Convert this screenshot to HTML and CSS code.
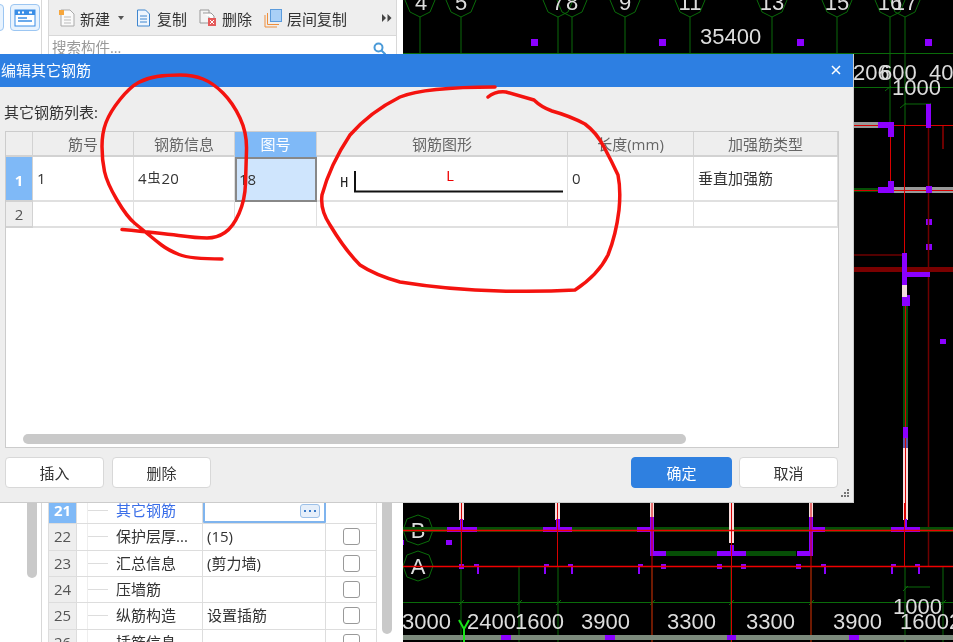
FILE: index.html
```html
<!DOCTYPE html>
<html lang="zh">
<head>
<meta charset="utf-8">
<title>编辑其它钢筋</title>
<link rel="stylesheet" href="styles.css">
</head>
<body>
<div class="app">
  <aside class="strip">
    <div class="strip-tools">
      <span class="tool-btn tool-btn-cut"></span>
      <span class="tool-btn">
        <svg width="22" height="18" viewBox="0 0 22 18"><rect x="1" y="1" width="20" height="16" fill="#fff" stroke="#3a8ee6"/><rect x="1" y="1" width="20" height="5" fill="#3a8ee6"/><rect x="4" y="2.500" width="2" height="2" fill="#fff"/><rect x="8" y="2.500" width="2" height="2" fill="#fff"/><rect x="15" y="2.500" width="3" height="2" fill="#fff"/><path d="M4 9h9M4 12h14" stroke="#3a8ee6" stroke-width="1.500"/></svg>
      </span>
    </div>
    <div class="strip-thumb"></div>
  </aside>

  <section class="panel">
    <div class="toolbar">
      <span class="tb-item tb-new">
        <svg width="18" height="18" viewBox="0 0 18 18"><path d="M3 1h9l4 4v12H3z" fill="#fafafa" stroke="#aaa"/><path d="M6 8h7M6 11h7M6 14h7" stroke="#bbb"/><rect x="1" y="1" width="5" height="5" fill="#f6a63c"/></svg>
        <span>新建</span><i class="caret"></i>
      </span>
      <span class="tb-item tb-copy">
        <svg width="15" height="18" viewBox="0 0 15 18"><path d="M1.500 1h8l4 4v12h-12z" fill="#eef5fd" stroke="#3f86cf"/><path d="M4 7h7M4 10h7M4 13h7" stroke="#3f86cf"/></svg>
        <span>复制</span>
      </span>
      <span class="tb-item tb-del">
        <svg width="18" height="18" viewBox="0 0 18 18"><path d="M1 1h9v13H1z" fill="#f4f4f4" stroke="#999"/><path d="M4 4h8l3 3v4" fill="#fff" stroke="#999"/><rect x="9" y="9" width="8" height="8" fill="#e45b5b"/><path d="M11 11l4 4M15 11l-4 4" stroke="#fff"/></svg>
        <span>删除</span>
      </span>
      <span class="tb-item tb-floor">
        <svg width="18" height="19" viewBox="0 0 18 19"><path d="M1 6v12h12" fill="none" stroke="#ef8f3c"/><path d="M3.500 4v11.500H15" fill="none" stroke="#ef8f3c"/><rect x="6.500" y="0.500" width="11" height="12" fill="#a9d0f7" stroke="#5b9bdc"/></svg>
        <span>层间复制</span>
      </span>
      <svg class="tb-more" width="10" height="8" viewBox="0 0 10 8"><path d="M0 0l4 4-4 4zM5.500 0l4 4-4 4z" fill="#444"/></svg>
    </div>
    <div class="search">
      <span>搜索构件...</span>
      <svg width="13" height="13" viewBox="0 0 13 13"><circle cx="5.500" cy="5.500" r="4" fill="none" stroke="#4a9ad8" stroke-width="2"/><path d="M8.500 8.500l4 4" stroke="#4a9ad8" stroke-width="2"/></svg>
    </div>
    <div class="props-area">
      <div class="props">
        <div class="prow prow-active">
          <span class="pnum pnum-active">21</span><span class="ptree"></span>
          <span class="pname pname-active">其它钢筋</span>
          <span class="pval pval-edit"><span class="ellipsis"><svg width="14" height="4" viewBox="0 0 14 4"><path d="M1 1h2v2H1zM6 1h2v2H6zM11 1h2v2h-2z" fill="#3a7bc8"/></svg></span></span>
          <span class="pcheck"></span>
        </div>
        <div class="prow"><span class="pnum">22</span><span class="ptree"></span><span class="pname">保护层厚...</span><span class="pval">(15)</span><span class="pcheck"><i class="box"></i></span></div>
        <div class="prow"><span class="pnum">23</span><span class="ptree"></span><span class="pname">汇总信息</span><span class="pval">(剪力墙)</span><span class="pcheck"><i class="box"></i></span></div>
        <div class="prow"><span class="pnum">24</span><span class="ptree"></span><span class="pname">压墙筋</span><span class="pval"></span><span class="pcheck"><i class="box"></i></span></div>
        <div class="prow"><span class="pnum">25</span><span class="ptree"></span><span class="pname">纵筋构造</span><span class="pval">设置插筋</span><span class="pcheck"><i class="box"></i></span></div>
        <div class="prow"><span class="pnum">26</span><span class="ptree"></span><span class="pname">插筋信息</span><span class="pval"></span><span class="pcheck"><i class="box"></i></span></div>
      </div>
      <div class="props-thumb"></div>
    </div>
  </section>

  <main class="cad">
    <svg class="cad-svg" width="550" height="642" viewBox="403 0 550 642">
      <!-- top axes -->
      <g class="g-line">
        <path d="M420 17V54M461 17V54M558 17V54M572 17V54M625 17V54M690 17V54M772 17V54M837 17V54M890 17V123M905 17V125"/>
        <path d="M403 53.500H953M853 87.500H953M905 104H930M461 503V642M519 566V642M558 566V642M652 566V642M731 566V642M811 566V642M905 566V642M943 566V642M403 602.500H953M905 587H930"/>
        <path d="M885 91l6-5M900 108l6-5M926 108l5-5M459 605l5-5M517 605l5-5M556 605l5-5M650 605l5-5M729 605l5-5M809 605l5-5M903 591l5-5M941 605l5-5"/>
      </g>
      <g class="g-axis">
        <path d="M405 0l5 12 10 5 10-5 5-12-5-10-20 0z"/>
        <path d="M446 0l5 12 10 5 10-5 5-12-5-10-20 0z"/>
        <path d="M543 0l5 12 10 5 10-5 5-12-5-10-20 0z"/>
        <path d="M557 0l5 12 10 5 10-5 5-12-5-10-20 0z"/>
        <path d="M610 0l5 12 10 5 10-5 5-12-5-10-20 0z"/>
        <path d="M675 0l5 12 10 5 10-5 5-12-5-10-20 0z"/>
        <path d="M757 0l5 12 10 5 10-5 5-12-5-10-20 0z"/>
        <path d="M822 0l5 12 10 5 10-5 5-12-5-10-20 0z"/>
        <path d="M875 0l5 12 10 5 10-5 5-12-5-10-20 0z"/>
        <path d="M890 0l5 12 10 5 10-5 5-12-5-10-20 0z"/>
        <path d="M418 515l11 4 4 11-4 11-11 4-11-4-4-11 4-11z"/>
        <path d="M418 551l11 4 4 11-4 11-11 4-11-4-4-11 4-11z"/>
      </g>
      <g class="cad-text">
        <text x="421" y="10" class="tc">4</text><text x="461" y="10" class="tc">5</text>
        <text x="558" y="10" class="tc">7</text><text x="572" y="10" class="tc">8</text>
        <text x="625" y="10" class="tc">9</text><text x="690" y="10" class="tc">11</text>
        <text x="772" y="10" class="tc">13</text><text x="837" y="10" class="tc">15</text>
        <text x="890" y="10" class="tc">16</text><text x="905" y="10" class="tc">17</text>
        <text x="700" y="44">35400</text>
        <text x="853" y="80">206</text><text x="880" y="80">600</text><text x="929" y="80">40</text>
        <text x="892" y="95">1000</text>
        <text x="418" y="538" class="tc">B</text><text x="418" y="574" class="tc">A</text>
        <text x="402" y="629">3000</text><text x="467" y="629">2400</text><text x="515" y="629">1600</text>
        <text x="581" y="629">3900</text><text x="667" y="629">3300</text><text x="746" y="629">3300</text>
        <text x="833" y="629">3900</text><text x="893" y="614">1000</text><text x="900" y="629">16002</text>
      </g>
      <!-- purple dots -->
      <g class="purple">
        <rect x="531" y="39" width="7" height="7"/><rect x="659" y="39" width="7" height="7"/>
        <rect x="797" y="39" width="7" height="7"/><rect x="925" y="39" width="7" height="7"/>
        <rect x="926" y="219" width="6" height="6"/><rect x="926" y="244" width="6" height="6"/>
        <rect x="940" y="339" width="6" height="5"/><rect x="446" y="540" width="6" height="5"/>
        <rect x="403" y="540" width="1" height="5"/>
      </g>
      <!-- walls, upper right -->
      <rect class="wall" x="853" y="122" width="28" height="6"/>
      <rect class="wall" x="893" y="187" width="60" height="6"/>
      <rect class="band" x="853" y="188" width="26" height="4"/>
      <rect class="band" x="903" y="306" width="5" height="121"/>
      <rect class="wall-v" x="903" y="448" width="5" height="72"/>
      <rect class="wall-b" x="903" y="438" width="5" height="10"/>
      <path class="red-fine" d="M853 125.500H953M943 125V149M890.500 137V182M904.500 125V253M853 190.500H953"/>
      <path class="dark-red" d="M928.500 125V566M853 255H903"/>
      <rect class="dark-band" x="853" y="267" width="100" height="5"/>
      <path class="red-fine" d="M905.500 306V520"/>
      <path class="purple" d="M926 104h5v24h-5zM878 122h16v15h-6v-9h-10zM888 181h6v12h-16v-6h10zM926 186h6v7h-6zM902 253h5v19h23v5h-23v18h3v11h-8z"/>
      <rect class="purple" x="903" y="427" width="5" height="11"/>
      <rect x="902" y="285" width="5" height="12" fill="#f2dcdc"/>
      <!-- walls, lower -->
      <rect class="band" x="403" y="527" width="550" height="5"/>
      <rect class="band" x="666" y="551" width="51" height="5"/>
      <rect class="band" x="746" y="551" width="50" height="5"/>
      <rect class="wall-v" x="459" y="503" width="5" height="17"/>
      <rect class="wall-v" x="555" y="503" width="5" height="17"/>
      <rect class="wall-v" x="650" y="503" width="4" height="14"/>
      <rect class="wall-v" x="729" y="503" width="5" height="40"/>
      <rect class="wall-v" x="809" y="503" width="4" height="14"/>
      <path class="purple" d="M447 527h13v-8h3v8h14v5h-30zM543 527h13v-8h4v8h12v5h-29zM637 527h13v-10h4v34h12v5h-16v-24h-13zM809 517h4v10h12v5h-12v24h-16v-5h12zM891 527h13v-8h3v8h13v5h-29zM717 551h13v-6h4v6h12v5h-29z"/>
      <g class="purple">
        <rect x="459" y="564" width="5" height="5"/><rect x="661" y="564" width="5" height="5"/>
        <rect x="717" y="564" width="5" height="5"/><rect x="741" y="564" width="5" height="5"/><rect x="796" y="564" width="5" height="5"/>
        <path d="M474 564h5v10h-2v-7h-3zM544 564h5v3h-3v7h-2zM568 564h5v10h-2v-7h-3zM638 564h5v3h-3v7h-2zM821 564h5v10h-2v-7h-3zM891 564h5v3h-3v7h-2zM915 564h5v10h-2v-7h-3z"/>
      </g>
      <path class="red-line" d="M403 530.500H953M403 566.500H953"/>
      <path class="red-fine" d="M461.500 503V566M557.500 503V566M652 503V642M731.500 503V642M811 503V642M904.500 503V566"/>
      <!-- bottom band -->
      <rect x="403" y="635" width="550" height="5" fill="#7c8a7c"/>
      <g class="purple">
        <rect x="501" y="635" width="10" height="5"/><rect x="605" y="635" width="10" height="5"/>
        <rect x="727" y="635" width="9" height="5"/><rect x="849" y="635" width="10" height="5"/>
      </g>
      <path class="y-axis" d="M459 620l5 9 5-9M464 629V642"/>
    </svg>
  </main>

  <div class="dialog">
    <header class="dlg-title">
      <span>编辑其它钢筋</span>
      <svg class="dlg-close" width="10" height="10" viewBox="0 0 10 10"><path d="M1 1l8 8M9 1l-8 8" stroke="#fff" stroke-width="1.500"/></svg>
    </header>
    <div class="dlg-label">其它钢筋列表:</div>
    <div class="grid-box">
      <div class="grid">
        <div class="gh"></div><div class="gh">筋号</div><div class="gh">钢筋信息</div><div class="gh gh-sel">图号</div><div class="gh">钢筋图形</div><div class="gh">长度(mm)</div><div class="gh">加强筋类型</div>

        <div class="gn gn-sel">1</div>
        <div class="gc">1</div>
        <div class="gc">4<span class="rebar">虫</span>20</div>
        <div class="gc gc-sel">18</div>
        <div class="gc gc-shape">
          <svg width="250" height="44" viewBox="0 0 250 44"><text x="23" y="30" class="sh-h">H</text><path d="M38 14V34.500H246" fill="none" stroke="#111" stroke-width="2"/><text x="129" y="24" class="sh-l">L</text></svg>
        </div>
        <div class="gc">0</div>
        <div class="gc">垂直加强筋</div>

        <div class="gn">2</div><div class="gc"></div><div class="gc"></div><div class="gc"></div><div class="gc"></div><div class="gc"></div><div class="gc"></div>
      </div>
      <div class="grid-space"></div>
      <div class="hscroll"><div class="hscroll-thumb"></div></div>
    </div>
    <footer class="dlg-foot">
      <button class="btn" type="button">插入</button>
      <button class="btn" type="button">删除</button>
      <span class="foot-gap"></span>
      <button class="btn btn-primary" type="button">确定</button>
      <button class="btn" type="button">取消</button>
    </footer>
    <svg class="grip" width="10" height="10" viewBox="0 0 10 10"><path d="M7 1h2v2H7zM4 4h2v2H4zM7 4h2v2H7zM1 7h2v2H1zM4 7h2v2H4zM7 7h2v2H7z" fill="#777"/></svg>
  </div>

  <svg class="ink" width="953" height="642" viewBox="0 0 953 642">
    <path d="M122 229.500Q160 233 178.500 235.500Q197 238 207 238Q217 238 225 232.500Q233 227 239 213.500Q245 200 245.500 183.500Q246 167 246.500 150Q247 133 240 118Q233 103 223 93Q213 83 203 79Q193 75 180 75Q167 75 157 76.500Q147 78 138.500 82.500Q130 87 120 99.500Q110 112 106 122.500Q102 133 102 146.500Q102 160 104.500 171.500Q107 183 117 200Q127 217 135 223.500Q143 230 149 235Q155 240 161.500 245Q168 250 179 254.500Q190 259 222 259"/>
    <path d="M488 97Q495 91 506 92Q520 96 534 100Q541 107 552 111Q570 116 585 124Q597 133 604 147Q612 162 618 175Q621 190 619 210Q616 235 608 255Q598 275 575 290Q540 292 500 291Q450 290 400 282Q375 275 360 265Q345 250 330 225Q320 210 322 195Q330 165 350 135Q370 112 400 97Q425 87 495 87"/>
  </svg>
</div>
</body>
</html>
```
FILE: styles.css
```css
* { box-sizing: border-box; }
html, body { margin: 0; padding: 0; background: #fff; }
body { font-family: "Open Sans", "Noto Sans CJK SC", sans-serif; font-size: 15px; color: #333; }

.app { position: relative; width: 953px; height: 642px; display: flex; overflow: hidden; background: #fff; filter: blur(0.4px); }

/* left strip */
.strip { width: 42px; flex: none; border-right: 1px solid #d8d8d8; display: flex; flex-direction: column; }
.strip-tools { display: flex; gap: 6px; padding-top: 4px; margin-left: -26px; }
.tool-btn { width: 30px; height: 27px; border: 1px solid #9cc6f2; border-radius: 4px; background: #e8f3fe; display: flex; align-items: center; justify-content: center; flex: none; }
.strip-thumb { width: 10px; height: 400px; margin: 147px 0 0 27px; background: #c9c9c9; border-radius: 5px; }

/* panel */
.panel { width: 349px; flex: none; margin-left: 6px; display: flex; flex-direction: column; overflow: hidden; }
.toolbar { height: 36px; flex: none; display: flex; align-items: center; gap: 12px; padding: 1px 0 0 9px; background: #eee; border: 1px solid #d8d8d8; border-top: 0; }
.tb-item { display: flex; align-items: center; gap: 4px; white-space: nowrap; }
.tb-copy { gap: 6px; }
.tb-del { gap: 5px; }
.tb-floor { gap: 5px; }
.caret { width: 0; height: 0; margin-left: 4px; border: 3px solid transparent; border-top: 4px solid #555; border-bottom: 0; }
.tb-more { margin-left: auto; margin-right: 4px; }
.search { height: 30px; flex: none; display: flex; justify-content: space-between; padding: 3px 10px 0 3px; color: #999; font-size: 14.500px; line-height: 18px; border-left: 1px solid #d8d8d8; border-right: 1px solid #d8d8d8; }
.search svg { margin-top: 3px; }
.props-area { flex: none; display: flex; padding-top: 432px; align-items: flex-start; }
.props { width: 329px; border-left: 1px solid #ddd; border-right: 1px solid #ddd; flex: none; }
.prow { display: grid; grid-template-columns: 28px 11px 115px 123px 50px; height: 26.330px; border-bottom: 1px solid #ddd; align-items: stretch; font-size: 15px; line-height: 25px; }
.pnum { background: #eee; color: #555; text-align: center; border-right: 1px solid #ddd; }
.pnum-active { background: #7fb9f7; color: #fff; font-weight: 700; }
.ptree { border-right: 1px solid #eee; }
.pname { position: relative; padding-left: 28px; border-right: 1px solid #ddd; white-space: nowrap; }
.pname::before { content: ""; position: absolute; left: 0; top: 12px; width: 20px; height: 1px; background: #ddd; }
.pname-active { color: #3a6ee8; }
.pval { padding-left: 4px; border-right: 1px solid #ddd; white-space: nowrap; }
.pval-edit { border: 2px solid #7fb4ee; border-radius: 1px; display: flex; justify-content: flex-end; align-items: center; padding-right: 4px; }
.ellipsis { width: 20px; height: 14px; border: 1px solid #9cc0e8; border-radius: 3px; background: #e6effa; display: flex; align-items: center; justify-content: center; }
.pcheck { display: flex; align-items: center; justify-content: center; }
.box { width: 17px; height: 17px; border: 1px solid #999; border-radius: 3px; background: #fff; }
.props-thumb { width: 10px; height: 160px; margin: -24px 0 0 5px; background: #c9c9c9; border-radius: 5px; flex: none; }

/* cad canvas */
.cad { width: 550px; height: 642px; margin-left: 6px; flex: none; background: #000; }
.cad-svg { display: block; }
.g-line { fill: none; stroke: #0a6b0a; stroke-width: 1; }
.g-axis { fill: none; stroke: #0a6b0a; stroke-width: 1; }
.cad-text { fill: #ddd; font-family: "Liberation Sans", sans-serif; font-size: 22px; }
.tc { text-anchor: middle; }
.purple { fill: #8b00ff; }
.wall { fill: #999; }
.wall-v { fill: #f6dcdc; }
.wall-b { fill: #5a5aaa; }
.band { fill: #064f06; }
.dark-band { fill: #7a0000; }
.red-fine { fill: none; stroke: #d80000; stroke-width: 1; }
.red-line { fill: none; stroke: #f00000; stroke-width: 1.500; }
.dark-red { fill: none; stroke: #6e0000; stroke-width: 1.500; }
.y-axis { fill: none; stroke: #19e619; stroke-width: 2; }

/* dialog */
.dialog { position: absolute; left: 0; top: 54px; width: 854px; height: 449px; background: #eee; border-right: 1px solid #ccc; border-bottom: 1px solid #ccc; display: flex; flex-direction: column; }
.dlg-title { height: 33px; flex: none; background: #2d7fe2; color: #fff; display: flex; align-items: center; justify-content: space-between; padding: 0 12px 0 1px; line-height: 31px; }
.dlg-close { margin-top: -1px; }
.dlg-label { height: 44px; flex: none; padding: 15px 0 0 4px; font-size: 15px; line-height: 20px; color: #333; }
.grid-box { width: 834px; height: 317px; margin-left: 5px; flex: none; background: #fff; border: 1px solid #ccc; display: flex; flex-direction: column; }
.grid { display: grid; grid-template-columns: 27px 101px 101px 82px 251px 126px 144px; grid-template-rows: 25px 45px 26px; }
.gh { background: #eee; border-right: 1px solid #d2d2d2; border-bottom: 2px solid #d2d2d2; text-align: center; color: #666; line-height: 25px; font-size: 15px; white-space: nowrap; }
.gh-sel { background: #7fb9f7; color: #fff; border-bottom-color: #7fb9f7; }
.gn { background: #eee; color: #555; text-align: center; border-right: 1px solid #d2d2d2; border-bottom: 2px solid #d2d2d2; line-height: 25px; }
.gn-sel { background: #7fb9f7; color: #fff; font-weight: 700; line-height: 47px; }
.gc { border-right: 1px solid #e0e0e0; border-bottom: 2px solid #e0e0e0; padding-left: 4px; line-height: 42px; color: #333; white-space: nowrap; }
.gc-sel { background: #cfe5fd; border: 2px solid #888; padding-left: 2px; line-height: 40px; }
.gc-shape { padding: 0; }
.gc-shape svg { display: block; }
.rebar { font-size: 13px; position: relative; top: -2px; margin: 0 1px; }
.sh-h { font-family: "Liberation Mono", monospace; font-size: 14px; fill: #222; }
.sh-l { font-family: "Liberation Mono", monospace; font-size: 14px; fill: #e00; }
.grid-space { flex: 1; }
.hscroll { height: 10px; margin-bottom: 3px; padding-left: 17px; flex: none; }
.hscroll-thumb { width: 663px; height: 10px; background: #c9c9c9; border-radius: 5px; }
.dlg-foot { display: flex; gap: 8px; margin-top: 9px; padding: 0 15px 0 5px; }
.btn { width: 99px; height: 31px; background: #fff; border: 1px solid #d8d8d8; border-radius: 4px; font: inherit; font-size: 15px; color: #333; padding: 0; }
.btn-primary { width: 101px; margin-right: -1px; background: #2f80e0; border-color: #2f80e0; color: #fff; }
.foot-gap { flex: 1; }
.grip { position: absolute; right: 3px; bottom: 4px; }

/* pen annotation lying over the screen */
.ink { position: absolute; left: 0; top: 0; pointer-events: none; }
.ink path { fill: none; stroke: #f4130f; stroke-width: 3.500; stroke-linejoin: round; stroke-linecap: round; }
```
